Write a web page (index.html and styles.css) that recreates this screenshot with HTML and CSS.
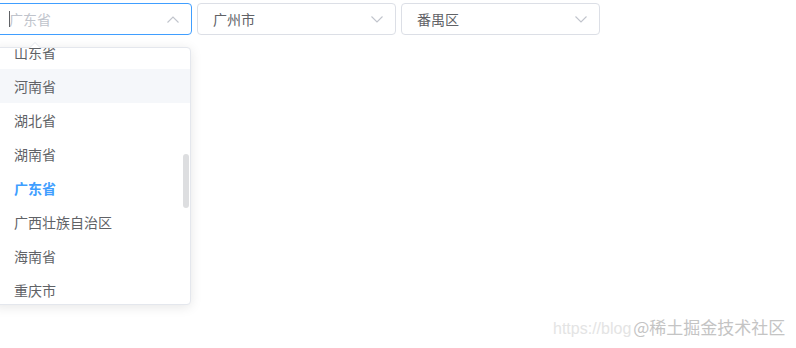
FILE: index.html
```html
<!DOCTYPE html>
<html lang="zh">
<head>
<meta charset="utf-8">
<link rel="stylesheet" href="styles.css">
</head>
<body>
<div class="page">
  <div class="selects">
    <div class="select is-focus">
      <span class="placeholder"><span class="caret"></span>广东省</span>
      <svg class="chev up" width="12" height="7" viewBox="0 0 12 7"><path d="M0.5 6.5 L6 1 L11.5 6.5" fill="none" stroke="#c0c4cc" stroke-width="1.1"/></svg>
    </div>
    <div class="select">
      <span class="value">广州市</span>
      <svg class="chev" width="12" height="7" viewBox="0 0 12 7"><path d="M0.5 0.5 L6 6 L11.5 0.5" fill="none" stroke="#c0c4cc" stroke-width="1.1"/></svg>
    </div>
    <div class="select">
      <span class="value">番禺区</span>
      <svg class="chev" width="12" height="7" viewBox="0 0 12 7"><path d="M0.5 0.5 L6 6 L11.5 0.5" fill="none" stroke="#c0c4cc" stroke-width="1.1"/></svg>
    </div>
  </div>
  <div class="dropdown">
    <span class="arrow"></span>
    <ul class="list">
      <li class="item">山东省</li>
      <li class="item hover">河南省</li>
      <li class="item">湖北省</li>
      <li class="item">湖南省</li>
      <li class="item selected">广东省</li>
      <li class="item">广西壮族自治区</li>
      <li class="item">海南省</li>
      <li class="item">重庆市</li>
    </ul>
    <span class="thumb"></span>
  </div>
</div>
<div class="watermark"><span class="wm-url">https://blog</span><span class="wm-main">@稀土掘金技术社区</span></div>
</body>
</html>
```
FILE: styles.css
```css
* { box-sizing: border-box; }
html, body { margin: 0; padding: 0; background: #fff; }
body {
  width: 796px;
  height: 348px;
  overflow: hidden;
  position: relative;
  font-family: "Noto Sans CJK SC", "Noto Sans", sans-serif;
  font-size: 14px;
  color: #606266;
}
.page {
  margin-left: -7px;
  padding-top: 3px;
}
.selects {
  display: flex;
  gap: 5px;
}
.select {
  width: 199px;
  height: 32px;
  border: 1px solid #dcdfe6;
  border-radius: 4px;
  display: flex;
  align-items: center;
  justify-content: space-between;
  padding: 0 12px 0 15px;
  line-height: 1;
}
.select.is-focus { border-color: #409eff; }
.placeholder { color: #c0c4cc; position: relative; }
.caret {
  position: absolute;
  left: 0;
  top: -1px;
  width: 1px;
  height: 16px;
  background: #606266;
}
.value { color: #606266; }
.chev { display: block; }
.dropdown {
  position: relative;
  margin-top: 12px;
  width: 198px;
  height: 258px;
  border: 1px solid #e4e7ed;
  border-radius: 4px;
  background: #fff;
  box-shadow: 0 2px 12px rgba(0,0,0,0.1);
}
.arrow {
  position: absolute;
  top: -6px;
  left: 35px;
  width: 0;
  height: 0;
  border-left: 6px solid transparent;
  border-right: 6px solid transparent;
  border-bottom: 6px solid #e4e7ed;
}
.arrow::after {
  content: "";
  position: absolute;
  left: -5px;
  top: 1px;
  border-left: 5px solid transparent;
  border-right: 5px solid transparent;
  border-bottom: 5px solid #fff;
}
.list {
  list-style: none;
  margin: 0;
  padding: 0;
  height: 256px;
  overflow: hidden;
  border-radius: 4px;
}
.item {
  height: 34px;
  line-height: 34px;
  padding: 0 20px;
  color: #606266;
  white-space: nowrap;
}
.item:first-child { margin-top: -13px; }
.item.hover { background: #f5f7fa; }
.item.selected { color: #409eff; font-weight: 700; }
.thumb {
  position: absolute;
  right: 1px;
  top: 106px;
  width: 6px;
  height: 54px;
  border-radius: 3px;
  background: rgba(144,147,153,0.3);
}
.watermark {
  position: absolute;
  left: 553px;
  top: 315px;
  display: flex;
  align-items: center;
  gap: 2px;
  white-space: nowrap;
}
.wm-url {
  font-family: "Liberation Sans", sans-serif;
  font-size: 16px;
  color: #e4e4e4;
  margin-top: 5px;
}
.wm-main {
  font-size: 17px;
  color: #c4c4c4;
  line-height: 22px;
}
```
